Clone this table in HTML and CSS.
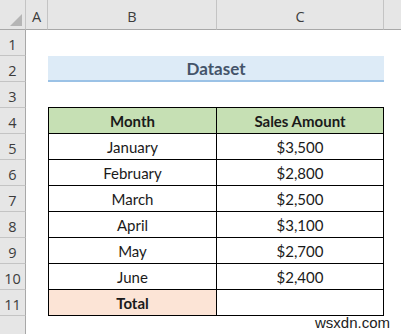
FILE: index.html
```html
<!DOCTYPE html>
<html>
<head>
  <meta charset="UTF-8">
  <link rel="stylesheet" href="styles.css">
</head>
<body>
  <div class="sheet">
    <div class="row head-row">
      <div class="corner"><span class="corner-mark"></span></div>
      <div class="col-head">A</div>
      <div class="col-head">B</div>
      <div class="col-head">C</div>
      <div class="col-head"></div>
    </div>

    <div class="row">
      <div class="row-head">1</div>
    </div>

    <div class="row">
      <div class="row-head">2</div>
      <div class="cell"></div>
      <div class="title">Dataset</div>
    </div>

    <div class="row">
      <div class="row-head">3</div>
    </div>

    <div class="row">
      <div class="row-head">4</div>
      <div class="cell"></div>
      <div class="td td-b th">Month</div>
      <div class="td th">Sales Amount</div>
    </div>

    <div class="row">
      <div class="row-head">5</div>
      <div class="cell"></div>
      <div class="td td-b">January</div>
      <div class="td">$3,500</div>
    </div>

    <div class="row">
      <div class="row-head">6</div>
      <div class="cell"></div>
      <div class="td td-b">February</div>
      <div class="td">$2,800</div>
    </div>

    <div class="row">
      <div class="row-head">7</div>
      <div class="cell"></div>
      <div class="td td-b">March</div>
      <div class="td">$2,500</div>
    </div>

    <div class="row">
      <div class="row-head">8</div>
      <div class="cell"></div>
      <div class="td td-b">April</div>
      <div class="td">$3,100</div>
    </div>

    <div class="row">
      <div class="row-head">9</div>
      <div class="cell"></div>
      <div class="td td-b">May</div>
      <div class="td">$2,700</div>
    </div>

    <div class="row">
      <div class="row-head">10</div>
      <div class="cell"></div>
      <div class="td td-b">June</div>
      <div class="td">$2,400</div>
    </div>

    <div class="row">
      <div class="row-head">11</div>
      <div class="cell"></div>
      <div class="td td-b total">Total</div>
      <div class="td"></div>
    </div>

    <div class="row last-row">
      <div class="row-head"></div>
    </div>

    <div class="watermark">wsxdn.com</div>
  </div>
</body>
</html>
```

FILE: styles.css
```css
:root {
  --head-bg: #e6e6e6;
  --head-line: #c4c4c4;
  --head-edge: #a8a8a8;
  --head-text: #3c3c3c;
  --cell-text: #1a1a1a;
  --green: #c6e0b4;
  --peach: #fce4d6;
  --title-bg: #ddebf7;
  --title-line: #9bc2e6;
  --title-text: #44546a;
}

body {
  margin: 0;
  width: 401px;
  height: 334px;
  overflow: hidden;
  background: #fff;
  font-family: Lato, "Liberation Sans", sans-serif;
}

.sheet {
  position: relative;
  height: 334px;
}

.row {
  display: grid;
  grid-template-columns: 26px 22px 169px 167px 1fr;
  height: 26px;
}

.head-row {
  height: 30px;
}

.last-row {
  height: 18px;
}

/* headers */
.corner,
.col-head,
.row-head {
  box-sizing: border-box;
  background: var(--head-bg);
  color: var(--head-text);
  font-family: "Open Sans", "Liberation Sans", sans-serif;
  font-size: 14.5px;
}

.corner {
  display: flex;
  align-items: flex-end;
  justify-content: flex-end;
  padding: 0 3px 3px 0;
  border-right: 1px solid var(--head-line);
  border-bottom: 1px solid var(--head-edge);
}

.corner-mark {
  width: 12px;
  height: 12px;
  background: #b5b5b5;
  clip-path: polygon(100% 0, 100% 100%, 0 100%);
}

.col-head {
  display: flex;
  align-items: flex-end;
  justify-content: center;
  padding-bottom: 3px;
  border-right: 1px solid var(--head-line);
  border-bottom: 1px solid var(--head-edge);
}

.col-head:last-child {
  border-right: none;
}

.row-head {
  display: flex;
  align-items: center;
  justify-content: center;
  padding-top: 4px;
  border-right: 1px solid var(--head-edge);
  border-bottom: 1px solid var(--head-line);
}

.last-row .row-head {
  border-bottom: none;
}

/* cells */
.title {
  grid-column: 3 / 5;
  box-sizing: border-box;
  display: flex;
  align-items: center;
  justify-content: center;
  background: var(--title-bg);
  border-bottom: 2px solid var(--title-line);
  color: var(--title-text);
  font-weight: 700;
  font-size: 17px;
  padding-top: 1px;
}

.td {
  box-sizing: border-box;
  display: flex;
  align-items: center;
  justify-content: center;
  border-right: 1px solid #000;
  border-bottom: 1px solid #000;
  color: var(--cell-text);
  font-size: 15px;
  padding-top: 1px;
}

.td-b {
  border-left: 1px solid #000;
}

.th {
  background: var(--green);
  font-weight: 700;
  border-top: 1px solid #000;
  margin-top: -1px;
}

.total {
  background: var(--peach);
  font-weight: 700;
}

.watermark {
  position: absolute;
  right: 11px;
  bottom: 3px;
  font-family: "Liberation Sans", sans-serif;
  font-size: 15px;
  color: #222;
}
```
